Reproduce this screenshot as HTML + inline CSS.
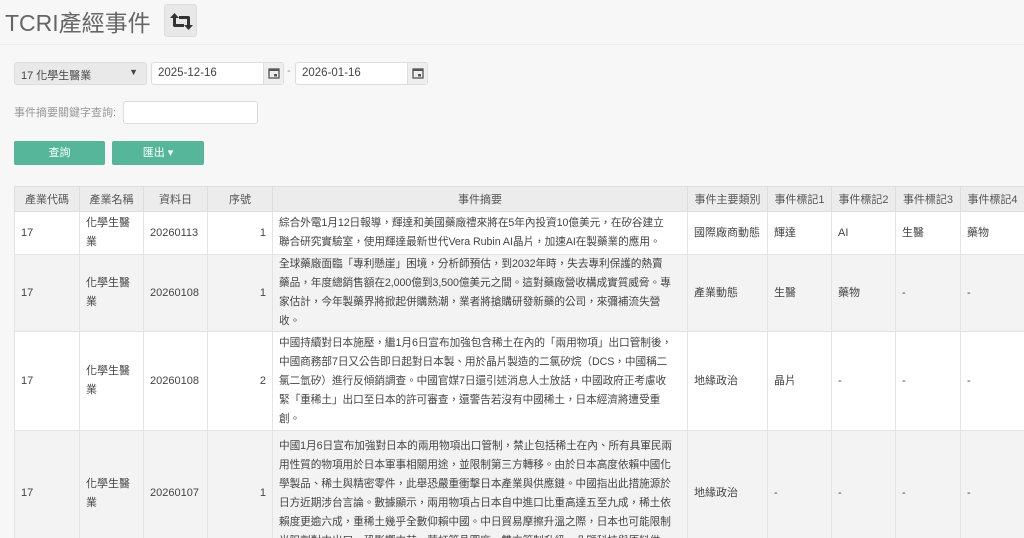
<!DOCTYPE html>
<html><head><meta charset="utf-8"><style>
*{box-sizing:border-box}
html,body{margin:0;background:#f7f7f7;font-family:"Liberation Sans","Noto Sans CJK TC",sans-serif;color:#444;width:1024px;height:538px;overflow:hidden;position:relative}
.abs{position:absolute}
h1{position:absolute;left:5px;top:4px;margin:0;font-weight:normal;font-size:23px;color:#666;white-space:nowrap}
.ib{left:164px;top:4px;width:33px;height:33px;background:#e8e8e8;border-radius:3px;border:1px solid #ddd}
.hr{left:0;top:44px;width:1024px;height:1px;background:#ececec}
.sel{left:14px;top:62px;width:133px;height:23px;background:#e9e9e9;border:1px solid #ddd;border-radius:3px;font-size:11px;padding:4px 6px}
.inp{height:23px;background:#fff;border:1px solid #ddd;border-radius:3px;font-size:11.5px;padding:4px 6px}
.cal{width:20px;height:21px;background:#eee;border-left:1px solid #ddd;right:0;top:0}
.btn{top:141px;height:24px;background:#55b699;border-radius:2px;color:#fff;font-size:11px;text-align:center;line-height:24px}
table{position:absolute;left:14px;top:186px;border-collapse:collapse;font-size:11px;table-layout:fixed;width:1010px}
th{background:#ececec;font-weight:normal;color:#555;height:25px;border:1px solid #ddd;text-align:center;padding:0;white-space:nowrap;overflow:hidden}
td{border:1px solid #e3e3e3;padding:0 6px;line-height:19px;vertical-align:middle;color:#444;white-space:nowrap;overflow:hidden}
td.s{font-size:10.65px;letter-spacing:-0.05px}
tr.w td{background:#fff}tr.g td{background:#f3f3f3}
.r{text-align:right}
</style></head><body>
<h1>TCRI產經事件</h1>
<div class="abs ib"><svg width="33" height="33" viewBox="0 0 33 33"><path d="M8 21V13h-3l4.5-5 4.5 5h-3v6h8v3H9z M25 12v8h3l-4.5 5-4.5-5h3v-6h-8v-3h10z" fill="#333"/></svg></div>
<div class="abs hr"></div>
<div class="abs sel">17 化學生醫業<span style="position:absolute;right:8px;top:4px;font-size:9px">▼</span></div>
<div class="abs inp" style="left:151px;top:62px;width:133px">2025-12-16<div class="abs cal"><svg width="20" height="21"><rect x="5" y="6" width="10" height="9" fill="none" stroke="#555" stroke-width="1.3"/><rect x="5" y="6" width="10" height="2" fill="#555"/><rect x="10" y="11" width="3" height="2.5" fill="#555"/></svg></div></div>
<div class="abs" style="left:287px;top:65px;font-size:11px;color:#888">-</div>
<div class="abs inp" style="left:295px;top:62px;width:133px">2026-01-16<div class="abs cal"><svg width="20" height="21"><rect x="5" y="6" width="10" height="9" fill="none" stroke="#555" stroke-width="1.3"/><rect x="5" y="6" width="10" height="2" fill="#555"/><rect x="10" y="11" width="3" height="2.5" fill="#555"/></svg></div></div>
<div class="abs" style="left:14px;top:104px;font-size:11px;color:#999">事件摘要關鍵字查詢:</div>
<div class="abs inp" style="left:123px;top:101px;width:135px"></div>
<div class="abs btn" style="left:14px;width:91px">查詢</div>
<div class="abs btn" style="left:112px;width:92px">匯出 ▾</div>
<table>
<colgroup><col style="width:65px"><col style="width:64px"><col style="width:64px"><col style="width:65px"><col style="width:415px"><col style="width:80px"><col style="width:64px"><col style="width:64px"><col style="width:65px"><col style="width:64px"></colgroup>
<tr><th>產業代碼</th><th>產業名稱</th><th>資料日</th><th>序號</th><th>事件摘要</th><th>事件主要類別</th><th>事件標記1</th><th>事件標記2</th><th>事件標記3</th><th>事件標記4</th></tr>
<tr class="w" style="height:43px"><td>17</td><td>化學生醫<br>業</td><td>20260113</td><td class="r">1</td><td class="s">綜合外電1月12日報導，輝達和美國藥廠禮來將在5年內投資10億美元，在矽谷建立<br>聯合研究實驗室，使用輝達最新世代Vera Rubin AI晶片，加速AI在製藥業的應用。</td><td>國際廠商動態</td><td>輝達</td><td>AI</td><td>生醫</td><td>藥物</td></tr>
<tr class="g" style="height:77px"><td>17</td><td>化學生醫<br>業</td><td>20260108</td><td class="r">1</td><td class="s">全球藥廠面臨「專利懸崖」困境，分析師預估，到2032年時，失去專利保護的熱賣<br>藥品，年度總銷售額在2,000億到3,500億美元之間。這對藥廠營收構成實質威脅。專<br>家估計，今年製藥界將掀起併購熱潮，業者將搶購研發新藥的公司，來彌補流失營<br>收。</td><td>產業動態</td><td>生醫</td><td>藥物</td><td>-</td><td>-</td></tr>
<tr class="w" style="height:99px"><td>17</td><td>化學生醫<br>業</td><td>20260108</td><td class="r">2</td><td class="s">中國持續對日本施壓，繼1月6日宣布加強包含稀土在內的「兩用物項」出口管制後，<br>中國商務部7日又公告即日起對日本製、用於晶片製造的二氯矽烷（DCS，中國稱二<br>氯二氫矽）進行反傾銷調查。中國官媒7日還引述消息人士放話，中國政府正考慮收<br>緊「重稀土」出口至日本的許可審查，還警告若沒有中國稀土，日本經濟將遭受重<br>創。</td><td>地緣政治</td><td>晶片</td><td>-</td><td>-</td><td>-</td></tr>
<tr class="g" style="height:126px"><td>17</td><td>化學生醫<br>業</td><td>20260107</td><td class="r">1</td><td class="s">中國1月6日宣布加強對日本的兩用物項出口管制，禁止包括稀土在內、所有具軍民兩<br>用性質的物項用於日本軍事相關用途，並限制第三方轉移。由於日本高度依賴中國化<br>學製品、稀土與精密零件，此舉恐嚴重衝擊日本產業與供應鏈。中國指出此措施源於<br>日方近期涉台言論。數據顯示，兩用物項占日本自中進口比重高達五至九成，稀土依<br>賴度更逾六成，重稀土幾乎全數仰賴中國。中日貿易摩擦升溫之際，日本也可能限制<br>光阻劑對中出口，恐影響中芯、華虹等晶圓廠。雙方管制升級，凸顯科技與原料供</td><td>地緣政治</td><td>-</td><td>-</td><td>-</td><td>-</td></tr>
</table>
</body></html>
